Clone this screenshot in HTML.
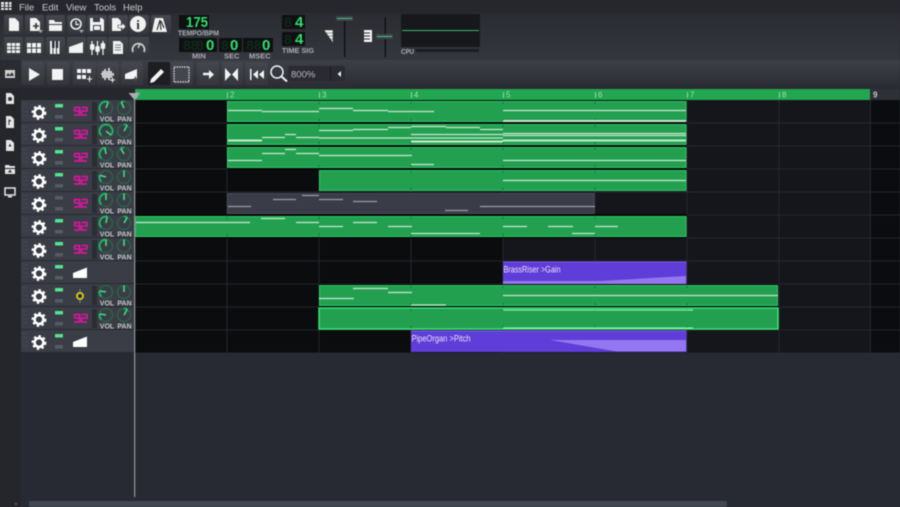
<!DOCTYPE html>
<html><head><meta charset="utf-8"><style>
html,body{margin:0;padding:0;width:900px;height:507px;overflow:hidden;background:#272a32}
svg{display:block;filter:blur(.45px)}
text{font-family:"Liberation Sans",sans-serif}
.l{font-size:7.5px;font-weight:bold;fill:#a9acb2}
.k{font-size:7px;font-weight:bold;fill:#c4c7cb;text-anchor:middle}
.t{font-size:8px;fill:#a6dcb8}
.n{stroke:#c9e8d2;stroke-width:1.2}
.nt{stroke:#c9e8d2;stroke-width:2}
.g{stroke:#9a9ca5;stroke-width:1.2}
.lcd{font-family:"Liberation Mono",monospace;font-weight:bold;fill:#2fe06a}
.gh{font-family:"Liberation Mono",monospace;font-weight:bold;fill:#11281b}
.base{fill:none;stroke:#2c6149;stroke-width:1.5}
.arc{fill:none;stroke:#1db562;stroke-width:2}
.nd{stroke:#3ee084;stroke-width:1.6}
</style></head><body>
<svg width="900" height="507" viewBox="0 0 900 507" xmlns="http://www.w3.org/2000/svg">
<defs>
<linearGradient id="tb" x1="0" y1="0" x2="0" y2="1"><stop offset="0" stop-color="#2a2c32"/><stop offset="1" stop-color="#35373e"/></linearGradient>
<linearGradient id="tr" x1="0" y1="0" x2="0" y2="1"><stop offset="0" stop-color="#3e4048"/><stop offset="1" stop-color="#2a2c32"/></linearGradient>
<linearGradient id="bt" x1="0" y1="0" x2="0" y2="1"><stop offset="0" stop-color="#45474f"/><stop offset="1" stop-color="#34363c"/></linearGradient>
<g id="gear"><circle r="4.4" fill="none" stroke="#fff" stroke-width="2.6"/><circle r="6.4" fill="none" stroke="#fff" stroke-width="2" pathLength="80" stroke-dasharray="5 5"/></g>
<path id="logo" d="M.5 1h5.500v3.500H1M1 1v3.500M6 4.500V8.500H.5M8 1h5.500v3.500H8v4h5.500" fill="none" stroke="#d3179d" stroke-width="1.800"/>
<g id="grip" fill="#494c54"><rect x="0" y="3" width="1.5" height="1.5"/><rect x="3" y="3" width="1.5" height="1.5"/><rect x="0" y="7" width="1.5" height="1.5"/><rect x="3" y="7" width="1.5" height="1.5"/><rect x="0" y="11" width="1.5" height="1.5"/><rect x="3" y="11" width="1.5" height="1.5"/><rect x="0" y="15" width="1.5" height="1.5"/><rect x="3" y="15" width="1.5" height="1.5"/></g>
</defs>

<!-- backgrounds -->
<rect width="900" height="507" fill="#272a32"/>
<rect width="900" height="13" fill="#25272d"/>
<rect y="13" width="900" height="47" fill="url(#tb)"/>
<rect x="21" y="60" width="879" height="28" fill="url(#tr)"/>
<rect y="60" width="21" height="447" fill="#24262c"/>
<rect y="60" width="21" height="28" fill="#2a2c32"/>
<rect x="21" y="88" width="114" height="12" fill="#25272d"/>

<!-- menu -->
<g fill="#e8e8e8"><rect x="1" y="2" width="3" height="2.5"/><rect x="5" y="2" width="3" height="2.5"/><rect x="9" y="2" width="2.5" height="2.5"/><rect x="1" y="5" width="3" height="2"/><rect x="5" y="5" width="3" height="2"/><rect x="9" y="5" width="2.5" height="2"/><rect x="1" y="8" width="3" height="2"/><rect x="5" y="8" width="3" height="2"/><rect x="9" y="8" width="2.5" height="2"/></g>
<g font-size="9.5" fill="#c9cbce"><text x="19" y="10.5">File</text><text x="42" y="10.5">Edit</text><text x="66" y="10.5">View</text><text x="94" y="10.5">Tools</text><text x="123" y="10.5">Help</text></g>

<!-- toolbar buttons -->
<g fill="url(#bt)">
<rect x="4" y="15" width="19" height="19" rx="2"/><rect x="25" y="15" width="19" height="19" rx="2"/><rect x="46" y="15" width="19" height="19" rx="2"/><rect x="67" y="15" width="19" height="19" rx="2"/><rect x="87" y="15" width="20" height="19" rx="2"/><rect x="108" y="15" width="20" height="19" rx="2"/><rect x="129" y="15" width="20" height="19" rx="2"/><rect x="151" y="15" width="20" height="19" rx="2"/>
<rect x="4" y="37" width="19" height="20" rx="2"/><rect x="25" y="37" width="19" height="20" rx="2"/><rect x="46" y="37" width="19" height="20" rx="2"/><rect x="67" y="37" width="19" height="20" rx="2"/><rect x="87" y="37" width="20" height="20" rx="2"/><rect x="108" y="37" width="20" height="20" rx="2"/><rect x="129" y="37" width="20" height="20" rx="2"/>
</g>
<g fill="#f2f2f2">
<path d="M9 18h6l4 4v9H9z"/>
<path d="M30 18h6l4 4v9H30z"/><path d="M33 26h6M36 23v6" stroke="#333" stroke-width="1.6"/><path d="M38 30h5l-2.500 3z" fill="#aaa"/>
<path d="M49 20h5l1 2h7v2H49zM49 25h13v6H49z"/>
<circle cx="76" cy="24" r="5" fill="none" stroke="#f2f2f2" stroke-width="1.6"/><path d="M76 21v3.500h3" fill="none" stroke="#f2f2f2" stroke-width="1.2"/><path d="M79 30h5l-2.500 3z" fill="#aaa"/>
<path d="M90 18h12l2 2v11H90z"/><rect x="93" y="18" width="7" height="4" fill="#3b3e46"/><rect x="93" y="25" width="8" height="6" fill="#3b3e46"/><rect x="94" y="26" width="6" height="4"/>
<path d="M112 18h6l3 3v10h-9z"/><path d="M118 25h4v-2.500l4 4-4 4V28h-4z" stroke="#3b3e46" stroke-width=".6"/>
<circle cx="138" cy="24" r="8"/>
<path d="M155 18h8l4 14h-15z"/><path d="M157 30l3-10 1 10M161 21l3 7" fill="none" stroke="#333" stroke-width="1.2"/>
</g>
<text x="138" y="29" font-size="13" font-weight="bold" fill="#2b2d33" text-anchor="middle" style='font-family:"Liberation Serif",serif'>i</text>
<g fill="#f2f2f2">
<rect x="7" y="43" width="13" height="10"/><path d="M7 46.500h13M7 49.700h13M11.300 43v10M15.600 43v10" stroke="#3b3e46" stroke-width=".8"/>
<rect x="27" y="43" width="4" height="4.500"/><rect x="32" y="43" width="4" height="4.500"/><rect x="37" y="43" width="4" height="4.500"/><rect x="27" y="48.500" width="4" height="4.500"/><rect x="32" y="48.500" width="4" height="4.500"/><rect x="37" y="48.500" width="4" height="4.500"/>
<path d="M50 41h2.500v13H50zM53.500 41h2.500v13h-2.500zM57 41h2.500v13H57z"/><path d="M52 41h2.500v7H52zM55.700 41h2.500v7h-2.500z" fill="#2b2d33"/>
<path d="M69 53v-6l14-5v11z"/>
<path d="M92 41v14M97.500 41v14M103 41v14" stroke="#f2f2f2" stroke-width="1.2"/><rect x="90" y="44" width="4.500" height="6" rx="1.500"/><rect x="95.300" y="46" width="4.500" height="6" rx="1.500"/><rect x="100.700" y="43" width="4.500" height="6" rx="1.500"/>
<path d="M113 41h7l3 3v10h-10z"/><path d="M115 45h6M115 47.500h6M115 50h6" stroke="#555" stroke-width=".8"/>
<path d="M133 52a6 6 0 1 1 11 0" fill="none" stroke="#cfcfcf" stroke-width="1.800"/><path d="M138 48l2-4" stroke="#cfcfcf" stroke-width="1.400"/>
</g>

<!-- LCDs -->
<g fill="#0f1012">
<rect x="179" y="15" width="30" height="14"/><rect x="179" y="38" width="38" height="14"/><rect x="219" y="38" width="23" height="14"/><rect x="243" y="38" width="30" height="14"/>
<rect x="282" y="15" width="23" height="14"/><rect x="282" y="32" width="23" height="14"/>
</g>
<g class="gh" font-size="14"><text x="183" y="50">88</text><text x="196" y="50">8</text><text x="221" y="50">8</text><text x="246" y="50">88</text><text x="284" y="27">8</text><text x="284" y="44">8</text></g>
<g class="lcd" font-size="15">
<text x="186" y="27" textLength="22" lengthAdjust="spacingAndGlyphs">175</text>
<text x="206" y="50">0</text><text x="230" y="50">0</text><text x="262" y="50">0</text>
<text x="295" y="27">4</text><text x="295" y="44">4</text>
</g>
<text class="l" x="178" y="35.500" textLength="41" lengthAdjust="spacingAndGlyphs">TEMPO/BPM</text>
<text class="l" x="192" y="58.500">MIN</text><text class="l" x="224" y="58.500">SEC</text><text class="l" x="249" y="58.500">MSEC</text>
<text class="l" x="282" y="53" textLength="32" lengthAdjust="spacingAndGlyphs">TIME SIG</text>

<!-- faders -->
<path d="M324 30h9v13zM326 33h7M327 36h6M329 39h4" fill="#f2f2f2" stroke="#2f3137" stroke-width=".5"/>
<rect x="344" y="17" width="1.500" height="40" fill="#111214"/>
<rect x="336" y="16" width="17" height="5" rx="1" fill="#3f4349"/><rect x="337" y="18" width="15" height="1" fill="#45c07a"/>
<path d="M364 30h8v12h-8z" fill="#f2f2f2"/><path d="M364 33h6M364 36h6M364 39h6" stroke="#2f3137" stroke-width="1"/>
<rect x="384.500" y="17" width="1.500" height="40" fill="#111214"/>
<rect x="376" y="34" width="17" height="5" rx="1" fill="#3f4349"/><rect x="377" y="36" width="15" height="1" fill="#45c07a"/>
<!-- CPU -->
<rect x="401" y="14" width="79" height="33" fill="#17181b"/><rect x="402" y="30" width="77" height="1" fill="#3fb56e"/>
<text class="l" x="401" y="54" textLength="13" lengthAdjust="spacingAndGlyphs">CPU</text>
<rect x="416" y="49" width="63" height="3" fill="#1c1d20"/>

<!-- transport -->
<g fill="url(#bt)">
<rect x="22" y="62" width="22" height="23" rx="2"/><rect x="47" y="62" width="22" height="23" rx="2"/><rect x="73" y="62" width="23" height="23" rx="2"/><rect x="97" y="62" width="22" height="23" rx="2"/><rect x="121" y="62" width="22" height="23" rx="2"/>
<rect x="171" y="62" width="22" height="23" rx="2"/><rect x="197" y="62" width="22" height="23" rx="2"/><rect x="222" y="62" width="21" height="23" rx="2"/><rect x="245" y="62" width="23" height="23" rx="2"/>
</g>
<rect x="148" y="62" width="22" height="23" rx="2" fill="#1d1e22"/>
<g fill="#f4f4f4">
<path d="M29 68v13l11-6.500z"/>
<rect x="52" y="69" width="11" height="11"/>
<rect x="77" y="69" width="4" height="4"/><rect x="82" y="69" width="4" height="4"/><rect x="87" y="69" width="4" height="4"/><rect x="77" y="75" width="4" height="4"/><rect x="82" y="75" width="4" height="4"/><path d="M87 79h5M89.500 76v6" stroke="#f4f4f4"/>
<path d="M101 74h1M103 71v7M105 69v11M107 71v7M109 68v12M111 71v7M113 73v3" stroke="#f4f4f4" stroke-width="1.500"/><path d="M110 80h5M112.500 77.500v5" stroke="#f4f4f4"/>
<path d="M125 79v-5l12-5v10z"/><path d="M133 79h5M135.500 76.500v5" stroke="#444" stroke-width="1.200"/>
<path d="M151 79l10-10 3 3-10 10-4 1z"/>
<path d="M203 74h8" stroke="#f4f4f4" stroke-width="2.400"/><path d="M209 70l5 4.500-5 4.500z"/>
<path d="M225 68v13l6-6.500zM238 68v13l-6-6.500z"/>
<rect x="250" y="69" width="1.500" height="11"/><path d="M259 70v9l-5-4.500zM265 70v9l-5-4.500z" transform="translate(-1 0)"/>
</g>
<rect x="174" y="67" width="15" height="15" fill="#44464d" stroke="#e8e8e8" stroke-width="1.200" stroke-dasharray="1.500 1"/>
<circle cx="277" cy="72" r="6" fill="none" stroke="#f4f4f4" stroke-width="1.500"/><path d="M281.500 76.500l5.500 5" stroke="#f4f4f4" stroke-width="2"/>
<rect x="288" y="66" width="57" height="15" rx="2" fill="#292b31"/><rect x="330" y="66" width="1" height="15" fill="#191a1e"/>
<text x="291" y="77.500" font-size="9.500" fill="#b8babd">800%</text><path d="M341 71v6l-3.500-3z" fill="#f0f0f0"/>

<!-- sidebar icons -->
<g fill="#e6e6e6">
<rect x="5" y="70" width="10" height="8" fill="#d0d0d0"/><path d="M6 76l2-3 2 2 2-3 2 4z" fill="#333"/>
<path d="M6 93h5l3 3v8H6z"/><circle cx="10" cy="99" r="2" fill="#333"/>
<path d="M6 116h5l3 3v9H6z"/><path d="M9 125v-5l2 1" fill="none" stroke="#333"/>
<path d="M6 140h5l3 3v8H6z"/><path d="M10 143.500l1.500 3h-3z" fill="#333"/>
<path d="M5 165h4l1 1h5v2H5zM5 169h10v5H5z"/><path d="M10 169.500l2 3h-4z" fill="#333"/>
<rect x="5" y="188" width="10" height="7" fill="none" stroke="#e6e6e6" stroke-width="1.500"/><rect x="8" y="196" width="4" height="1.500"/>
</g>

<!-- timeline -->
<rect x="135" y="89" width="735" height="11" fill="#22a650"/>
<rect x="870" y="89" width="30" height="11" fill="#2e3037"/>
<g fill="#8fd8a8"><rect x="136.500" y="92" width="1" height="6"/><rect x="227" y="92" width="1" height="6"/><rect x="319" y="92" width="1" height="6"/><rect x="411" y="92" width="1" height="6"/><rect x="503" y="92" width="1" height="6"/><rect x="595" y="92" width="1" height="6"/><rect x="687" y="92" width="1" height="6"/><rect x="779" y="92" width="1" height="6"/></g>
<text class="t" x="230" y="97.500">2</text><text class="t" x="322" y="97.500">3</text><text class="t" x="414" y="97.500">4</text><text class="t" x="506" y="97.500">5</text><text class="t" x="598" y="97.500">6</text><text class="t" x="690" y="97.500">7</text><text class="t" x="782" y="97.500">8</text>
<text x="873" y="97.500" font-size="8" font-weight="bold" fill="#c9cbcf">9</text>

<!-- grid -->
<rect x="135" y="100" width="368" height="253" fill="#0b0c0e"/>
<rect x="503" y="100" width="368" height="253" fill="#15161b"/>
<rect x="871" y="100" width="29" height="253" fill="#0b0c0f"/>
<g fill="#25272c">
<rect x="226.500" y="100" width="1" height="253"/><rect x="318.500" y="100" width="1" height="253"/><rect x="410.500" y="100" width="1" height="253"/><rect x="502.500" y="100" width="1" height="253"/><rect x="594.500" y="100" width="1" height="253"/><rect x="686.500" y="100" width="1" height="253"/><rect x="778.500" y="100" width="1" height="253"/><rect x="870" y="100" width="1" height="253"/>
<rect x="135" y="122.500" width="765" height="1"/><rect x="135" y="145.500" width="765" height="1"/><rect x="135" y="168.500" width="765" height="1"/><rect x="135" y="191.500" width="765" height="1"/><rect x="135" y="214.500" width="765" height="1"/><rect x="135" y="237.500" width="765" height="1"/><rect x="135" y="260.500" width="765" height="1"/><rect x="135" y="283.500" width="765" height="1"/><rect x="135" y="306.500" width="765" height="1"/><rect x="135" y="329.500" width="765" height="1"/><rect x="135" y="352.500" width="765" height="1"/>
</g>
<!-- dark gaps between clips -->
<g fill="#08090a"><rect x="227" y="100" width="460" height="1.500"/><rect x="227" y="122" width="460" height="2.500"/><rect x="227" y="145" width="460" height="2.500"/><rect x="227" y="168" width="460" height="2.500"/><rect x="135" y="214" width="552" height="2.500"/><rect x="135" y="237" width="552" height="1.500"/><rect x="319" y="284" width="460" height="1.500"/><rect x="319" y="306" width="460" height="1.500"/></g>

<!-- clips -->
<g fill="#22a04f" stroke="#2cc462" stroke-width="1">
<rect x="227.500" y="101.500" width="458.500" height="20"/>
<rect x="227.500" y="124.500" width="458.500" height="20"/>
<rect x="227.500" y="147.500" width="458.500" height="20"/>
<rect x="319.500" y="170.500" width="366.500" height="20"/>
<rect x="135.500" y="216.500" width="550.500" height="20"/>
<rect x="319.500" y="285.500" width="458" height="20"/>
</g>
<rect x="319" y="308" width="459" height="21" fill="#22a04f" stroke="#3cf07e" stroke-width="1.300"/>
<rect x="227.500" y="193.500" width="366.500" height="20" fill="#3a3d47" stroke="#474a55"/>
<rect x="503" y="262" width="183.500" height="22" fill="#5f3dd9"/>
<rect x="411" y="331" width="275.500" height="21" fill="#5f3dd9"/>
<path d="M503 281L600 281 686 276V284H503z" fill="#9477f0"/>
<path d="M550 340H686V351.500H617z" fill="#9477f0"/>
<rect x="503" y="261.500" width="183.500" height="1" fill="#7a5cf0"/>
<rect x="411" y="330.500" width="275.500" height="1" fill="#7a5cf0"/>
<text x="503.500" y="272.500" font-size="9.500" fill="#e6e2f5" textLength="57" lengthAdjust="spacingAndGlyphs">BrassRiser &gt;Gain</text>
<text x="411.500" y="341.500" font-size="9.500" fill="#e6e2f5" textLength="59" lengthAdjust="spacingAndGlyphs">PipeOrgan &gt;Pitch</text>

<!-- clip bar ticks -->
<path d="M319 102v2M411 102v2M503 102v2M595 102v2M319 119v2M411 119v2M503 119v2M595 119v2M319 125v2M411 125v2M503 125v2M595 125v2M319 142v2M411 142v2M503 142v2M595 142v2M319 148v2M411 148v2M503 148v2M595 148v2M319 165v2M411 165v2M503 165v2M595 165v2M411 171v2M503 171v2M595 171v2M411 188v2M503 188v2M595 188v2M227 217v2M319 217v2M411 217v2M503 217v2M595 217v2M227 234v2M319 234v2M411 234v2M503 234v2M595 234v2M411 286v2M503 286v2M595 286v2M687 286v2M411 303v2M503 303v2M595 303v2M687 303v2M411 309v2M503 309v2M595 309v2M687 309v2M411 326v2M503 326v2M595 326v2M687 326v2" stroke="#15713a" stroke-width="1"/>

<!-- notes -->
<g class="n">
<path d="M228 110.500h34M262 111.500h57M319 108.500h34M353 110.500h35M388 111.500h46M503 110.500h183"/>
<path d="M262 137.500h23M285 134.500h11M296 137.500h23M319 138h184M319 130.500h34M353 129.500h35M388 127.500h23M411 126.500h35M446 127.500h34M480 129.500h23M411 134.500h92M503 133.500h183M503 135.500h183"/>
<path d="M228 160.500h34M262 153.500h23M285 149.500h11M296 153.500h23M319 155.500h93M411 164.500h23M503 160.500h183"/>
<path d="M503 180.500h183"/>
<path d="M136 222.500h114M261 218.500h24M296 222.500h23M319 226.500h24M353 222.500h24M388 226.500h24M411 233.500h69M503 226.500h24M548 226.500h25M572 233.500h23M595 226.500h23"/>
<path d="M319 298.500h35M353 288.500h35M388 292.500h24M411 305h35M503 295.500h275"/>
</g>
<g class="nt"><path d="M503 121h183M228 140.500h34M411 141.500h92M503 140.500h183"/></g>
<path d="M503 310h190M503 328h190" stroke="#8cf0a8" stroke-width="1.300"/>
<path d="M228 206.500h23M273 199.500h23M302 195.500h17M319 199.500h24M353 201.500h24M445 210.500h23M480 206.500h115" class="g"/>

<!-- track heads -->
<g fill="#3a3d45">
<rect x="21" y="100" width="113" height="22"/><rect x="21" y="123" width="113" height="22"/><rect x="21" y="146" width="113" height="22"/><rect x="21" y="169" width="113" height="22"/><rect x="21" y="192" width="113" height="22"/><rect x="21" y="215" width="113" height="22"/><rect x="21" y="238" width="113" height="22"/><rect x="21" y="261" width="113" height="22"/><rect x="21" y="284" width="113" height="22"/><rect x="21" y="307" width="113" height="22"/><rect x="21" y="330" width="113" height="22"/>
</g>
<g fill="#2b2d34"><rect x="92" y="102" width="5" height="19"/><rect x="92" y="125" width="5" height="19"/><rect x="92" y="148" width="5" height="19"/><rect x="92" y="171" width="5" height="19"/><rect x="92" y="194" width="5" height="19"/><rect x="92" y="217" width="5" height="19"/><rect x="92" y="240" width="5" height="19"/><rect x="92" y="286" width="5" height="19"/><rect x="92" y="309" width="5" height="19"/></g>
<use href="#grip" x="23" y="100"/><use href="#grip" x="23" y="123"/><use href="#grip" x="23" y="146"/><use href="#grip" x="23" y="169"/><use href="#grip" x="23" y="192"/><use href="#grip" x="23" y="215"/><use href="#grip" x="23" y="238"/><use href="#grip" x="23" y="261"/><use href="#grip" x="23" y="284"/><use href="#grip" x="23" y="307"/><use href="#grip" x="23" y="330"/>
<use href="#gear" x="39" y="112.500"/><use href="#gear" x="39" y="135.500"/><use href="#gear" x="39" y="158.500"/><use href="#gear" x="39" y="181.500"/><use href="#gear" x="39" y="204.500"/><use href="#gear" x="39" y="227.500"/><use href="#gear" x="39" y="250.500"/><use href="#gear" x="39" y="273.500"/><use href="#gear" x="39" y="296.500"/><use href="#gear" x="39" y="319.500"/><use href="#gear" x="39" y="342.500"/>
<g fill="#52e58e"><rect x="55" y="104" width="8" height="3.500" rx=".5"/><rect x="55" y="127" width="8" height="3.500" rx=".5"/><rect x="55" y="150" width="8" height="3.500" rx=".5"/><rect x="55" y="173" width="8" height="3.500" rx=".5"/><rect x="55" y="219" width="8" height="3.500" rx=".5"/><rect x="55" y="242" width="8" height="3.500" rx=".5"/><rect x="55" y="265" width="8" height="3.500" rx=".5"/><rect x="55" y="288" width="8" height="3.500" rx=".5"/><rect x="55" y="311" width="8" height="3.500" rx=".5"/><rect x="55" y="334" width="8" height="3.500" rx=".5"/></g>
<g fill="#565b64"><rect x="55" y="196" width="8" height="3.500" rx=".5"/><rect x="55" y="115" width="8" height="3.500" rx=".5"/><rect x="55" y="138" width="8" height="3.500" rx=".5"/><rect x="55" y="161" width="8" height="3.500" rx=".5"/><rect x="55" y="184" width="8" height="3.500" rx=".5"/><rect x="55" y="207" width="8" height="3.500" rx=".5"/><rect x="55" y="230" width="8" height="3.500" rx=".5"/><rect x="55" y="253" width="8" height="3.500" rx=".5"/><rect x="55" y="276" width="8" height="3.500" rx=".5"/><rect x="55" y="299" width="8" height="3.500" rx=".5"/><rect x="55" y="322" width="8" height="3.500" rx=".5"/><rect x="55" y="345" width="8" height="3.500" rx=".5"/></g>
<use href="#logo" x="73.500" y="106.500"/><use href="#logo" x="73.500" y="129.500"/><use href="#logo" x="73.500" y="152.500"/><use href="#logo" x="73.500" y="175.500"/><use href="#logo" x="73.500" y="198.500"/><use href="#logo" x="73.500" y="221.500"/><use href="#logo" x="73.500" y="244.500"/><use href="#logo" x="73.500" y="313.500"/>
<path d="M73 278v-5l14-5.500V278zM73 347v-5l14-5.500V347z" fill="#fff"/>
<circle cx="80" cy="296" r="3" fill="#23262b" stroke="#d8c31c" stroke-width="2"/><path d="M80 289v3M80 300v3" stroke="#3d7ea0" stroke-width="1.500"/>

<!-- knobs: VOL -->
<g><circle class="base" cx="106" cy="108" r="6.500"/><circle class="arc" cx="106" cy="108" r="6.500" pathLength="360" stroke-dasharray="155 360" transform="rotate(-225 106 108)"/><line class="nd" x1="106" y1="108" x2="106" y2="101.500" transform="rotate(20 106 108)"/></g>
<g><circle class="base" cx="106" cy="131" r="6.500"/><circle class="arc" cx="106" cy="131" r="6.500" pathLength="360" stroke-dasharray="265 360" transform="rotate(-225 106 131)"/><line class="nd" x1="106" y1="131" x2="106" y2="124.500" transform="rotate(130 106 131)"/></g>
<g><circle class="base" cx="106" cy="154" r="6.500"/><circle class="arc" cx="106" cy="154" r="6.500" pathLength="360" stroke-dasharray="125 360" transform="rotate(-225 106 154)"/><line class="nd" x1="106" y1="154" x2="106" y2="147.500" transform="rotate(-10 106 154)"/></g>
<g><circle class="base" cx="106" cy="177" r="6.500"/><circle class="arc" cx="106" cy="177" r="6.500" pathLength="360" stroke-dasharray="60 360" transform="rotate(-225 106 177)"/><line class="nd" x1="106" y1="177" x2="106" y2="170.500" transform="rotate(-75 106 177)"/></g>
<g><circle class="base" cx="106" cy="200" r="6.500"/><circle class="arc" cx="106" cy="200" r="6.500" pathLength="360" stroke-dasharray="135 360" transform="rotate(-225 106 200)"/><line class="nd" x1="106" y1="200" x2="106" y2="193.500"/></g>
<g><circle class="base" cx="106" cy="223" r="6.500"/><circle class="arc" cx="106" cy="223" r="6.500" pathLength="360" stroke-dasharray="145 360" transform="rotate(-225 106 223)"/><line class="nd" x1="106" y1="223" x2="106" y2="216.500" transform="rotate(10 106 223)"/></g>
<g><circle class="base" cx="106" cy="246" r="6.500"/><circle class="arc" cx="106" cy="246" r="6.500" pathLength="360" stroke-dasharray="135 360" transform="rotate(-225 106 246)"/><line class="nd" x1="106" y1="246" x2="106" y2="239.500"/></g>
<g><circle class="base" cx="106" cy="292" r="6.500"/><circle class="arc" cx="106" cy="292" r="6.500" pathLength="360" stroke-dasharray="55 360" transform="rotate(-225 106 292)"/><line class="nd" x1="106" y1="292" x2="106" y2="285.500" transform="rotate(-80 106 292)"/></g>
<g><circle class="base" cx="106" cy="315" r="6.500"/><circle class="arc" cx="106" cy="315" r="6.500" pathLength="360" stroke-dasharray="55 360" transform="rotate(-225 106 315)"/><line class="nd" x1="106" y1="315" x2="106" y2="308.500" transform="rotate(-80 106 315)"/></g>
<!-- knobs: PAN -->
<g><circle class="base" cx="124" cy="108" r="6.500"/><circle class="arc" cx="124" cy="108" r="6.500" pathLength="360" stroke-dasharray="25 360" transform="rotate(-115 124 108)"/><line class="nd" x1="124" y1="108" x2="124" y2="101.500" transform="rotate(-25 124 108)"/></g>
<g><circle class="base" cx="124" cy="131" r="6.500"/><circle class="arc" cx="124" cy="131" r="6.500" pathLength="360" stroke-dasharray="30 360" transform="rotate(-90 124 131)"/><line class="nd" x1="124" y1="131" x2="124" y2="124.500" transform="rotate(30 124 131)"/></g>
<g><circle class="base" cx="124" cy="154" r="6.500"/><circle class="arc" cx="124" cy="154" r="6.500" pathLength="360" stroke-dasharray="30 360" transform="rotate(-120 124 154)"/><line class="nd" x1="124" y1="154" x2="124" y2="147.500" transform="rotate(-30 124 154)"/></g>
<g><circle class="base" cx="124" cy="177" r="6.500"/><line class="nd" x1="124" y1="177" x2="124" y2="170.500"/></g>
<g><circle class="base" cx="124" cy="200" r="6.500"/><line class="nd" x1="124" y1="200" x2="124" y2="193.500"/></g>
<g><circle class="base" cx="124" cy="223" r="6.500"/><circle class="arc" cx="124" cy="223" r="6.500" pathLength="360" stroke-dasharray="30 360" transform="rotate(-90 124 223)"/><line class="nd" x1="124" y1="223" x2="124" y2="216.500" transform="rotate(30 124 223)"/></g>
<g><circle class="base" cx="124" cy="246" r="6.500"/><line class="nd" x1="124" y1="246" x2="124" y2="239.500"/></g>
<g><circle class="base" cx="124" cy="292" r="6.500"/><line class="nd" x1="124" y1="292" x2="124" y2="285.500"/></g>
<g><circle class="base" cx="124" cy="315" r="6.500"/><circle class="arc" cx="124" cy="315" r="6.500" pathLength="360" stroke-dasharray="30 360" transform="rotate(-90 124 315)"/><line class="nd" x1="124" y1="315" x2="124" y2="308.500" transform="rotate(30 124 315)"/></g>
<text class="k" x="107" y="121.500">VOL</text><text class="k" x="124.500" y="121.500">PAN</text>
<text class="k" x="107" y="144.500">VOL</text><text class="k" x="124.500" y="144.500">PAN</text>
<text class="k" x="107" y="167.500">VOL</text><text class="k" x="124.500" y="167.500">PAN</text>
<text class="k" x="107" y="190.500">VOL</text><text class="k" x="124.500" y="190.500">PAN</text>
<text class="k" x="107" y="213.500">VOL</text><text class="k" x="124.500" y="213.500">PAN</text>
<text class="k" x="107" y="236.500">VOL</text><text class="k" x="124.500" y="236.500">PAN</text>
<text class="k" x="107" y="259.500">VOL</text><text class="k" x="124.500" y="259.500">PAN</text>
<text class="k" x="107" y="305.500">VOL</text><text class="k" x="124.500" y="305.500">PAN</text>
<text class="k" x="107" y="328.500">VOL</text><text class="k" x="124.500" y="328.500">PAN</text>

<!-- playhead -->
<rect x="134" y="95" width="1.300" height="402" fill="#8d9095"/>
<path d="M128.500 93h12l-6 7z" fill="#a9acb0"/>
<!-- scrollbar -->
<rect x="29" y="501" width="698" height="6" rx="2" fill="#414852"/>
<rect x="15" y="503" width="2" height="2" fill="#555"/>
</svg>
</body></html>
